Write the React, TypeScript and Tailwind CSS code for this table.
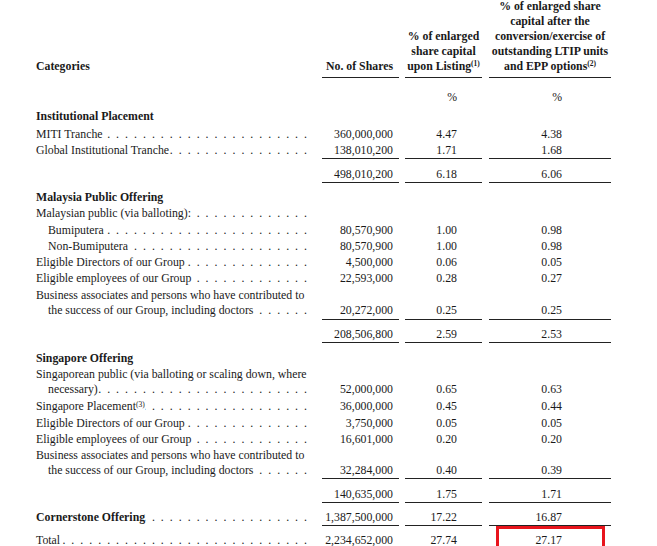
import type { ReactNode } from 'react';

const DOTS = '.'.repeat(60);

function Leader() {
  return (
    <span className="flex min-w-0 flex-1 justify-end overflow-hidden whitespace-nowrap pl-[4px] font-normal tracking-[6px]">
      {DOTS}
    </span>
  );
}

// fixed-height line boxes; the top padding sits the text a little lower in its slot
const LINE = 'h-[16.25px] pt-[2px] leading-[16.25px]';
const WRAP = 'h-[15px] pt-[2px] leading-[15px]';
const TIGHT = 'h-[16px] pt-[2px] leading-[16px]';

interface RowProps {
  label?: ReactNode;
  vals?: [string, string, string];
  bold?: boolean;
  indent?: boolean;
  dots?: boolean;
  line?: string;
  cell?: string;
  className?: string;
}

function Row({
  label = '',
  vals = ['', '', ''],
  bold = false,
  indent = false,
  dots = true,
  line = LINE,
  cell = '',
  className = '',
}: RowProps) {
  return (
    <div className={`flex ${className}`}>
      <div className={`flex w-[286px] pr-[9px] ${line} ${indent ? 'pl-[12px]' : ''} ${bold ? 'font-bold' : ''}`}>
        <span className="whitespace-nowrap">{label}</span>
        {dots && <Leader />}
      </div>
      <div className={`w-[77px] pr-[6px] text-right ${cell}`}>
        <div className={line}>{vals[0]}</div>
      </div>
      <div className={`ml-[6px] w-[77px] pr-[25px] text-right ${cell}`}>
        <div className={line}>{vals[1]}</div>
      </div>
      <div className={`ml-[7px] w-[122px] pr-[49px] text-right ${cell}`}>
        <div className={line}>{vals[2]}</div>
      </div>
    </div>
  );
}

function Subtotal({ vals, cell, className = '' }: { vals: [string, string, string]; cell: string; className?: string }) {
  return <Row vals={vals} dots={false} line={TIGHT} cell={`border-y border-[#222] ${cell}`} className={className} />;
}

function Header() {
  const head = 'flex h-[78px] flex-col justify-end pb-[3px] leading-[15px] font-bold';
  return (
    <div className="flex">
      <div className={`${head} w-[286px] border-b border-transparent`}>Categories</div>
      <div className={`${head} w-[77px] border-b border-[#222] pr-[6px] text-right`}>No. of Shares</div>
      <div className={`${head} ml-[6px] w-[77px] border-b border-[#222] text-center`}>
        <span>% of enlarged</span>
        <span>share capital</span>
        <span>
          upon Listing<sup className="text-[7.5px]">(1)</sup>
        </span>
      </div>
      <div className={`${head} ml-[7px] w-[122px] border-b border-[#222] text-center`}>
        <span>% of enlarged share</span>
        <span>capital after the</span>
        <span>conversion/exercise of</span>
        <span>outstanding LTIP units</span>
        <span>
          and EPP options<sup className="text-[7.5px]">(2)</sup>
        </span>
      </div>
    </div>
  );
}

export default function App() {
  return (
    <div
      className="h-[546px] overflow-hidden bg-white pl-[36px] text-[11.8px] text-[#1a1a1a]"
      style={{ fontFamily: '"Liberation Serif", "Times New Roman", serif' }}
    >
      <Header />

      <Row dots={false} vals={['', '%', '%']} className="mt-[9px]" />

      {/* Institutional Placement */}
      <Row label="Institutional Placement" bold dots={false} className="mt-[3px]" />
      <Row label="MITI Tranche" vals={['360,000,000', '4.47', '4.38']} className="mt-[1px]" />
      <Row label="Global Institutional Tranche" vals={['138,010,200', '1.71', '1.68']} />
      <Subtotal vals={['498,010,200', '6.18', '6.06']} cell="pt-[5px] pb-[2px]" className="mt-[2px]" />

      {/* Malaysia Public Offering */}
      <Row label="Malaysia Public Offering" bold dots={false} className="mt-[4px]" />
      <Row label="Malaysian public (via balloting):" />
      <Row label="Bumiputera" indent vals={['80,570,900', '1.00', '0.98']} />
      <Row label="Non-Bumiputera" indent vals={['80,570,900', '1.00', '0.98']} />
      <Row label="Eligible Directors of our Group" vals={['4,500,000', '0.06', '0.05']} />
      <Row label="Eligible employees of our Group" vals={['22,593,000', '0.28', '0.27']} />
      <Row
        label="Business associates and persons who have contributed to"
        dots={false}
        line={WRAP}
        className="mt-[1.5px]"
      />
      <Row
        label="the success of our Group, including doctors"
        indent
        line={WRAP}
        vals={['20,272,000', '0.25', '0.25']}
      />
      <Subtotal vals={['208,506,800', '2.59', '2.53']} cell="pt-[4px] pb-[2px]" className="mt-[3px]" />

      {/* Singapore Offering */}
      <Row label="Singapore Offering" bold dots={false} className="mt-[5px]" />
      <Row
        label="Singaporean public (via balloting or scaling down, where"
        dots={false}
        line={WRAP}
        className="mt-[1px]"
      />
      <Row label="necessary)" indent line={WRAP} vals={['52,000,000', '0.65', '0.63']} />
      <Row
        label={
          <>
            Singapore Placement<sup className="text-[7.5px]">(3)</sup>
          </>
        }
        vals={['36,000,000', '0.45', '0.44']}
        className="mt-[1px]"
      />
      <Row label="Eligible Directors of our Group" vals={['3,750,000', '0.05', '0.05']} />
      <Row label="Eligible employees of our Group" vals={['16,601,000', '0.20', '0.20']} />
      <Row
        label="Business associates and persons who have contributed to"
        dots={false}
        line={WRAP}
        className="mt-[1px]"
      />
      <Row
        label="the success of our Group, including doctors"
        indent
        line={WRAP}
        vals={['32,284,000', '0.40', '0.39']}
      />
      <Subtotal vals={['140,635,000', '1.75', '1.71']} cell="pt-[5px] pb-[2px]" className="mt-[2px]" />

      {/* Cornerstone + Total */}
      <Row
        label="Cornerstone Offering"
        bold
        line={TIGHT}
        vals={['1,387,500,000', '17.22', '16.87']}
        cell="border-b border-[#222] pb-[2px]"
        className="pt-[4px]"
      />
      <div className="mt-[3.5px] flex">
        <div className={`flex w-[286px] pr-[9px] ${LINE}`}>
          <span>Total</span>
          <Leader />
        </div>
        <div className="w-[77px] pr-[6px] text-right">
          <div className={LINE}>2,234,652,000</div>
        </div>
        <div className="ml-[6px] w-[77px] pr-[25px] text-right">
          <div className={LINE}>27.74</div>
        </div>
        <div className="relative ml-[7px] w-[122px] pr-[49px] text-right">
          <div className={LINE}>27.17</div>
          {/* highlight box */}
          <div className="absolute left-[7px] right-[6px] top-[-3.5px] h-[30px] border-[3px] border-[#e8141c]" />
        </div>
      </div>
    </div>
  );
}
